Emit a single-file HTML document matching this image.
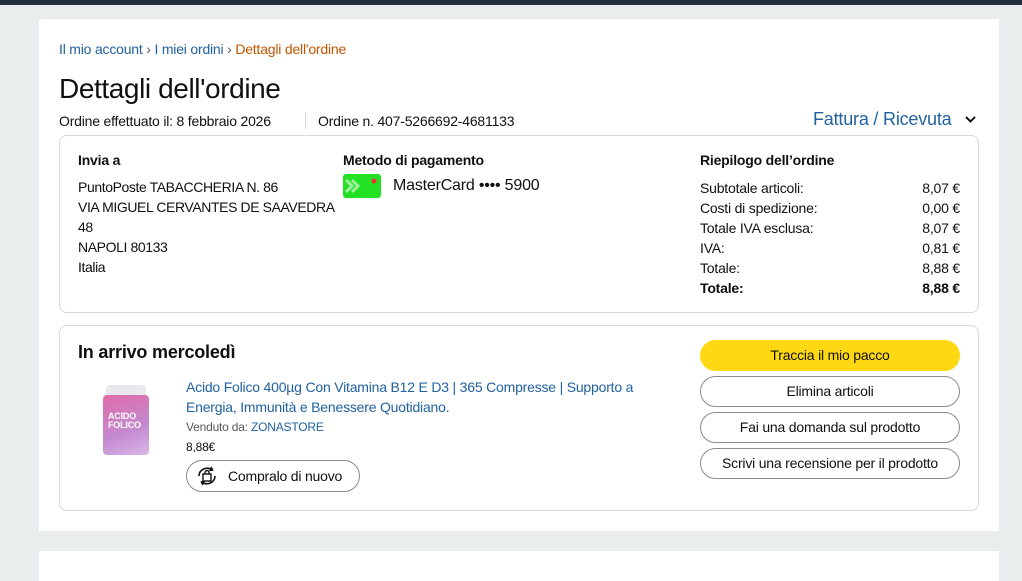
<!DOCTYPE html><html><head><meta charset="utf-8"><style>
*{margin:0;padding:0;box-sizing:border-box}
body{width:1022px;height:575px;overflow:hidden;background:#eaeded;font-family:"Liberation Sans",sans-serif;color:#0f1111;position:relative;font-size:14px;letter-spacing:-0.2px}
.a{position:absolute;white-space:nowrap}
.l{color:#2162a1}
.box{position:absolute;border:1px solid #d5d9d9;border-radius:8px;background:#fff}
.btn{position:absolute;left:700px;width:260px;height:31px;border:1px solid #888c8c;border-radius:16px;text-align:center;line-height:29px;font-size:14px;background:#fff}
.r{position:absolute;left:700px;width:260px;font-size:14px}
.r span{float:right}
</style></head><body>
<div class="a" style="left:0;top:0;width:1022px;height:5px;background:#232f3e"></div>
<div class="a" style="left:39px;top:19px;width:960px;height:512px;background:#fff"></div>
<div class="a" style="left:39px;top:551px;width:960px;height:30px;background:#fff"></div>
<div class="a" style="left:59px;top:41px;font-size:14px"><span class="l">Il mio account</span> <span style="color:#555">›</span> <span class="l">I miei ordini</span> <span style="color:#555">›</span> <span style="color:#c45500">Dettagli dell'ordine</span></div>
<div class="a" style="left:59px;top:73px;font-size:28px;letter-spacing:-0.4px">Dettagli dell'ordine</div>
<div class="a" style="left:59px;top:113px;font-size:14px">Ordine effettuato il: 8 febbraio 2026</div>
<div class="a" style="left:305px;top:112px;width:1px;height:17px;background:#d5d9d9"></div>
<div class="a" style="left:318px;top:113px;font-size:14px">Ordine n. 407-5266692-4681133</div>
<div class="a l" style="left:813px;top:109px;font-size:18px">Fattura / Ricevuta</div>
<svg class="a" style="left:964px;top:115px" width="13" height="10" viewBox="0 0 13 10"><path d="M2 2l4.5 4.5L11 2" fill="none" stroke="#0f1111" stroke-width="2"/></svg>
<div class="box" style="left:59px;top:135px;width:920px;height:178px"></div>
<div class="a" style="left:78px;top:152px;font-weight:bold;font-size:14px">Invia a</div>
<div class="a" style="left:78px;top:177px;line-height:20px;letter-spacing:-0.4px">PuntoPoste TABACCHERIA N. 86<br>VIA MIGUEL CERVANTES DE SAAVEDRA<br>48<br>NAPOLI 80133<br>Italia</div>
<div class="a" style="left:343px;top:152px;font-weight:bold">Metodo di pagamento</div>
<div class="a" style="left:343px;top:174px;width:38px;height:24px;background:#22e022;border-radius:3px"></div>
<svg class="a" style="left:343px;top:174px" width="38" height="24"><path d="M3 6l6 6-6 6M9 6l6 6-6 6" fill="none" stroke="#9ef09e" stroke-width="3"/><circle cx="31" cy="7" r="2.5" fill="#e33"/></svg>
<div class="a" style="left:393px;top:177px;font-size:16px">MasterCard •••• 5900</div>
<div class="a" style="left:700px;top:152px;font-weight:bold">Riepilogo dell’ordine</div>
<div class="r" style="top:180px">Subtotale articoli:<span>8,07 €</span></div>
<div class="r" style="top:200px">Costi di spedizione:<span>0,00 €</span></div>
<div class="r" style="top:220px">Totale IVA esclusa:<span>8,07 €</span></div>
<div class="r" style="top:240px">IVA:<span>0,81 €</span></div>
<div class="r" style="top:260px">Totale:<span>8,88 €</span></div>
<div class="r" style="top:280px;font-weight:bold">Totale:<span>8,88 €</span></div>
<div class="box" style="left:59px;top:325px;width:920px;height:186px"></div>
<div class="a" style="left:78px;top:342px;font-size:18px;font-weight:bold">In arrivo mercoledì</div>
<div class="a" style="left:106px;top:385px;width:40px;height:12px;background:#e8e8ee;border-radius:4px 4px 0 0"></div>
<div class="a" style="left:103px;top:395px;width:46px;height:60px;background:linear-gradient(160deg,#e06aa8,#c48ad0 60%,#d9b7e6);border-radius:4px"></div>
<div class="a" style="left:108px;top:412px;font-size:9px;color:#fff;font-weight:bold;line-height:9px">ACIDO<br>FOLICO</div>
<div class="a l" style="left:186px;top:377px;line-height:20px;white-space:normal;width:480px">Acido Folico 400µg Con Vitamina B12 E D3 | 365 Compresse | Supporto a Energia, Immunità e Benessere Quotidiano.</div>
<div class="a" style="left:186px;top:420px;font-size:12px;color:#565959">Venduto da: <span class="l">ZONASTORE</span></div>
<div class="a" style="left:186px;top:440px;font-size:12px">8,88€</div>
<div class="a" style="left:186px;top:460px;width:174px;height:32px;border:1px solid #888c8c;border-radius:16px"></div>
<svg class="a" style="left:194px;top:464px" width="26" height="24" viewBox="0 0 26 24"><path d="M5 12a8 8 0 0 1 13-6M21 12a8 8 0 0 1-13 6" fill="none" stroke="#0f1111" stroke-width="1.6"/><path d="M17 3l1.5 3-3 .5M9 21l-1.5-3 3-.5" fill="none" stroke="#0f1111" stroke-width="1.6"/><rect x="9" y="10" width="8" height="7" fill="none" stroke="#0f1111" stroke-width="1.4"/><path d="M11 10V8.5a2 2 0 0 1 4 0V10" fill="none" stroke="#0f1111" stroke-width="1.4"/></svg>
<div class="a" style="left:228px;top:468px;font-size:14px">Compralo di nuovo</div>
<div class="btn" style="top:340px;background:#ffd814;border-color:#ffd814">Traccia il mio pacco</div>
<div class="btn" style="top:376px">Elimina articoli</div>
<div class="btn" style="top:412px">Fai una domanda sul prodotto</div>
<div class="btn" style="top:448px">Scrivi una recensione per il prodotto</div>
</body></html>
